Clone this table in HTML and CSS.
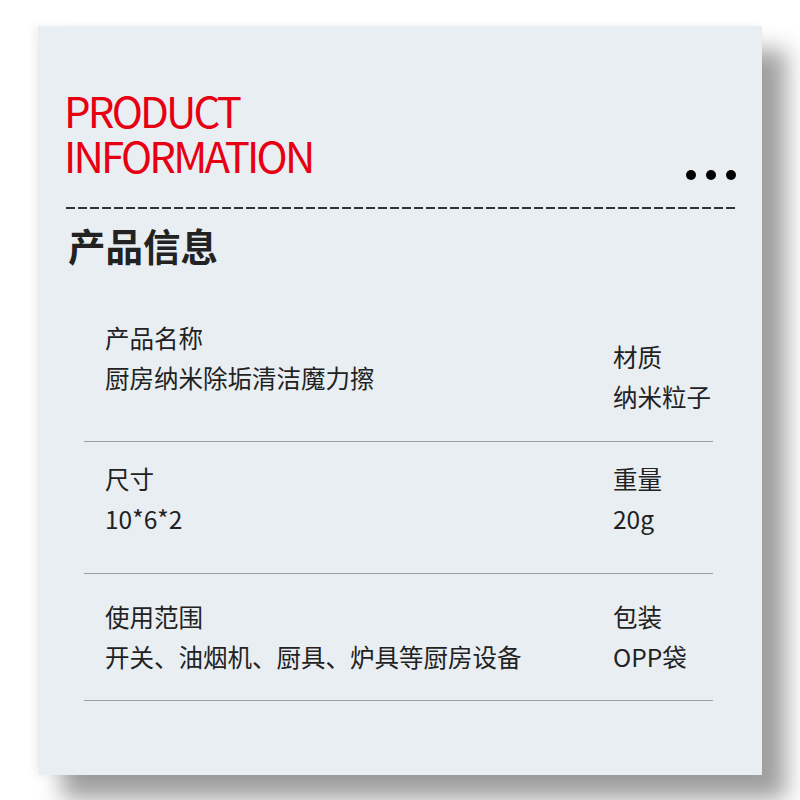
FILE: index.html
```html
<!DOCTYPE html>
<html lang="zh-CN">
<head>
<meta charset="utf-8">
<title>产品信息</title>
<link rel="stylesheet" href="styles.css">
</head>
<body>
<div class="card">
  <div class="header">
    <h1 class="title">PRODUCT<br>INFORMATION</h1>
    <div class="dots"><span></span><span></span><span></span></div>
  </div>
  <div class="rule"></div>
  <h2 class="subtitle">产品信息</h2>
  <div class="rows">
    <div class="row row-1">
      <div class="cell"><div>产品名称</div><div>厨房纳米除垢清洁魔力擦</div></div>
      <div class="cell cell-low"><div>材质</div><div>纳米粒子</div></div>
    </div>
    <div class="row row-2">
      <div class="cell"><div>尺寸</div><div>10*6*2</div></div>
      <div class="cell"><div>重量</div><div>20g</div></div>
    </div>
    <div class="row row-3">
      <div class="cell"><div>使用范围</div><div>开关、油烟机、厨具、炉具等厨房设备</div></div>
      <div class="cell"><div>包装</div><div>OPP袋</div></div>
    </div>
  </div>
</div>
</body>
</html>
```
FILE: styles.css
```css
* { box-sizing: border-box; }
html, body { margin: 0; padding: 0; background: #fff; }
body {
  font-family: "Noto Sans CJK SC", "Noto Sans", sans-serif;
  color: #222;
  overflow: hidden;
  height: 800px;
}
.card {
  margin: 26px 0 0 38px;
  width: 724px;
  height: 749px;
  background: #e9eef2;
  padding: 61px 26px 0 28px;
  box-shadow: 24px 24px 22px rgba(0,0,0,0.38), -4px 0 8px rgba(0,0,0,0.06);
}
.header {
  display: flex;
  justify-content: space-between;
  align-items: flex-end;
}
.title {
  margin: 0 0 0 -2px;
  font-weight: 400;
  font-size: 42px;
  line-height: 45px;
  color: #e60012;
  letter-spacing: -2.8px;
}
.dots {
  display: flex;
  gap: 10px;
  margin-bottom: -3px;
}
.dots span {
  width: 10px;
  height: 10px;
  border-radius: 50%;
  background: #000;
}
.rule {
  margin-top: 30px;
  height: 2px;
  background: repeating-linear-gradient(to right, #333 0 9px, transparent 9px 12px);
}
.subtitle {
  margin: 17px 0 0 2px;
  font-size: 37.5px;
  line-height: 37px;
  font-weight: 700;
  color: #222;
}
.rows {
  margin: 37px 23px 0 18px;
}
.row {
  display: grid;
  grid-template-columns: 508px 1fr;
  padding-left: 21px;
  border-bottom: 1px solid #9a9ea3;
  font-size: 24.5px;
  line-height: 40px;
}
.row-1 { padding-top: 18px; padding-bottom: 24px; }
.row-2 { padding-top: 17px; padding-bottom: 34px; }
.row-3 { padding-top: 23px; padding-bottom: 23px; }
.cell-low { padding-top: 19px; }
```
